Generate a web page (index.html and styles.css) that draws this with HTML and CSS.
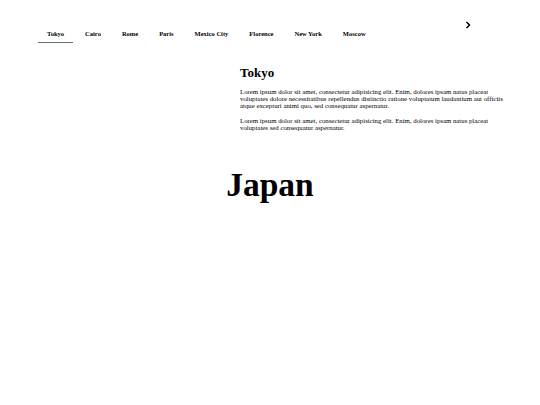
FILE: index.html
```html
<!DOCTYPE html>
<html>
<head>
<meta charset="utf-8">
<link rel="stylesheet" href="styles.css">
</head>
<body>
<nav class="tabbar">
  <ul class="tabs">
    <li class="tab active">Tokyo</li>
    <li class="tab">Cairo</li>
    <li class="tab">Rome</li>
    <li class="tab">Paris</li>
    <li class="tab">Mexico City</li>
    <li class="tab">Florence</li>
    <li class="tab">New York</li>
    <li class="tab">Moscow</li>
  </ul>
  <span class="next">
    <svg width="6" height="8" viewBox="0 0 6 8"><path d="M1.5 1 L4.5 4 L1.5 7" fill="none" stroke="#000" stroke-width="1.5"/></svg>
  </span>
</nav>
<main class="panel">
  <div class="media"></div>
  <article class="text">
    <h2 class="title">Tokyo</h2>
    <p>Lorem ipsum dolor sit amet, consectetur adipisicing elit. Enim, dolores ipsam natus placeat voluptates dolore necessitatibus repellendus distinctio ratione voluptatum laudantium aut officiis atque excepturi animi quo, sed consequatur aspernatur.</p>
    <p>Lorem ipsum dolor sit amet, consectetur adipisicing elit. Enim, dolores ipsam natus placeat voluptates sed consequatur aspernatur.</p>
  </article>
</main>
<h1 class="country">Japan</h1>
</body>
</html>
```
FILE: styles.css
```css
html, body {
  margin: 0;
  padding: 0;
  background: #fff;
  font-family: "Liberation Serif", "Times New Roman", serif;
  color: #000;
}
.tabbar {
  display: flex;
  align-items: flex-start;
  padding: 0 69px 0 38px;
}
.tabs {
  display: flex;
  gap: 3px;
  list-style: none;
  margin: 29px 0 0 0;
  padding: 0;
}
.tab {
  font-size: 6.5px;
  font-weight: bold;
  padding: 0 9px 4px;
  line-height: 9px;
  border-bottom: 1.5px solid transparent;
}
.tab.active {
  border-bottom-color: #5b7575;
}
.next {
  margin-left: auto;
  margin-top: 21px;
  display: block;
  line-height: 0;
}
.panel {
  display: grid;
  grid-template-columns: 240px 266px;
  margin-top: 22px;
}
.title {
  font-size: 13px;
  margin: 0 0 7px;
  line-height: 16px;
}
.text p {
  font-size: 6.8px;
  line-height: 7px;
  margin: 0 0 8px;
}
.country {
  text-align: center;
  font-size: 33.5px;
  line-height: 40px;
  margin: 26px 0 0;
}
```
